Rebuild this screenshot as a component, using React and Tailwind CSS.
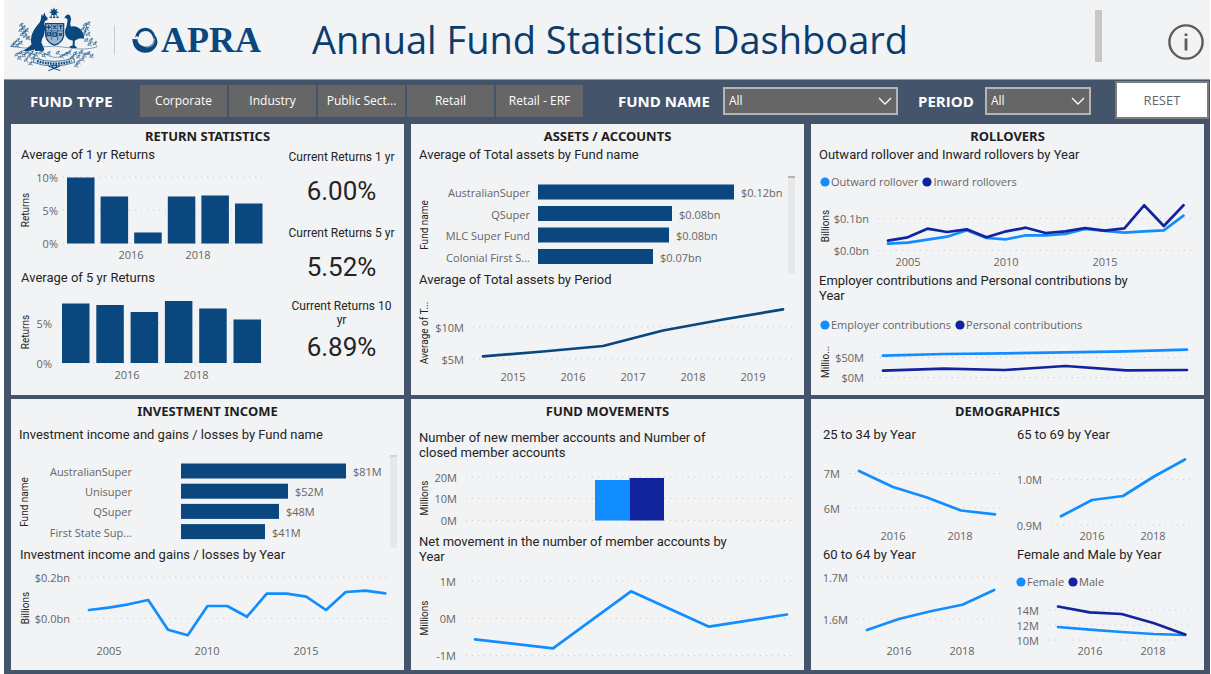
import React, { useState } from "react"

const NAVY = "#09477e"
const BLUE = "#118dff"
const INDIGO = "#12239e"

const FUND_TYPES = ["Corporate", "Industry", "Public Sect...", "Retail", "Retail - ERF"]

// Turns a list of heights into evenly spaced points
const spread = (start, step, ys) => ys.map((y, i) => [start + step * i, y])

const Coat = () => {
  const leaves = [
    [60, 72], [67, 80], [58, 88], [70, 94], [62, 101], [76, 88], [72, 106], [80, 112],
    [50, 118], [40, 126], [58, 126], [34, 134], [48, 134], [252, 72], [262, 68], [246, 84],
    [258, 84], [250, 96], [262, 100], [244, 108], [270, 118], [256, 118], [282, 128], [266, 130],
    [46, 162], [58, 156], [68, 164], [54, 172], [78, 154], [84, 166], [92, 156], [74, 178],
    [96, 172], [88, 188], [104, 160], [222, 158], [232, 168], [240, 154], [250, 164], [262, 158],
    [272, 166], [244, 176], [232, 184], [214, 170], [226, 194], [118, 156], [128, 164], [194, 160],
    [204, 156], [182, 166], [142, 158], [170, 156],
  ]
  return (
    <svg viewBox="24 18 270 196" className="h-[65px] w-[90px] shrink-0" fill={NAVY} role="img" aria-label="Australian Government">
      <path d="M159 19l3 8 8-4-4 8 8 3-8 3 3 8-7-4-3 6-3-6-7 4 3-8-8-3 8-3-4-8 8 4z" />
      <path d="M146 49h7M156 49h7M166 49h7" stroke={NAVY} strokeWidth="4" />
      {/* Kangaroo */}
      <path d="M122 39l4 6 4-11 4 11q8 5 6 11l-9 5q-3 9 1 16l10 9 1 7-12-4q-1 17-8 25l-2 11 8 19v6l-27 1-1-5q-13 5-37 5 18-10 27-20-5-22 7-43 9-14 18-24 4-8 4-14z" />
      {/* Emu */}
      <path d="M190 50l6-7q7-5 12 2 4 7 1 17-3 9 1 15 14-4 26 6 11 8 14 30-13-3-20 2l-8 4-1 14 8 9h-14l-9-1 1-5 8-2 1-14-13-5q-14-10-10-29 5-9 6-22l1-8-3-3z" />
      {/* Shield with six badges */}
      <path d="M134 68h54v38q-6 22-27 27-21-5-27-27z" fill="#9fb5cc" stroke={NAVY} strokeWidth="4" />
      <path d="M134 90h54M152 68v50M170 68v50" stroke={NAVY} strokeWidth="2" fill="none" />
      <path d="M143 72v14M137 79h12M156 74l10 10M166 74l-10 10M174 75h10M179 72v14M138 96h10v8h-10zM156 96h10v10h-10zM174 97l9 8M183 97l-9 8" stroke={NAVY} strokeWidth="4" fill="none" />
      {/* Wattle branches */}
      {leaves.map(([x, y], i) => (
        <g key={i} fill="none" stroke={NAVY} strokeWidth="2" opacity="0.85">
          <path d={`M${x - 5} ${y + 4}q1-9 8-8 1 8-8 8M${x + 1} ${y + 2}l6 4`} />
          <circle cx={x + 4} cy={y - 4} r="1.8" />
        </g>
      ))}
      <path d="M28 136q40 10 86 3t92 2 84-3M60 70q10 32 32 50M258 68q-2 26-12 44M50 158q44-10 68 18 16 14 40 28M270 160q-42-12-66 14-18 18-46 30M112 144q26 24 50 26t54-28" fill="none" stroke={NAVY} strokeWidth="2" opacity="0.7" />
      {/* Scroll */}
      <path d="M100 172q60 20 118 0l4 13q-66 22-126 0z" fill="#dbe3ec" stroke={NAVY} strokeWidth="2" />
      <path d="M108 181q54 16 104 0" fill="none" stroke={NAVY} strokeWidth="7" strokeDasharray="5 3" />
      <path d="M142 196l36 14M178 196l-36 14M152 194h16l-4 8h-8z" stroke={NAVY} strokeWidth="3" fill="none" />
    </svg>
  )
}

const Ring = () => (
  <svg viewBox="0 0 78 78" className="h-[26px] w-[26px] shrink-0" fill={NAVY} aria-hidden="true">
    <path d="M9 33Q14 3 40 2q26 2 30 28l-6 6Q60 13 41 12 21 13 19 31l-5-4z" />
    <path d="M1 36l15 1q2 20 23 22 21 0 27-18 3-11 0-20 14 16 9 32-9 23-35 24Q4 76 1 36z" />
    <path d="M37 64q28-3 29-33 9 31-29 33z" fill="#7d9cbd" />
  </svg>
)

const Chart = ({ width, height, label, axis, ticks, tickX, grid, years = [], yearY, children }) => (
  <svg
    viewBox={`0 0 ${width} ${height}`}
    className="block w-full overflow-visible font-['Open_Sans',sans-serif] text-[11px]"
    role="img"
    aria-label={label}
  >
    {ticks.map(([text, y]) => (
      <g key={text}>
        <line x1={grid[0]} x2={grid[1]} y1={y} y2={y} stroke="#c8c8c8" strokeDasharray="1 5" />
        <text x={tickX} y={y} textAnchor="end" dominantBaseline="central" fill="#666564">
          {text}
        </text>
      </g>
    ))}
    {years.map(([text, x]) => (
      <text key={text} x={x} y={yearY} textAnchor="middle" dominantBaseline="central" fill="#666564">
        {text}
      </text>
    ))}
    {axis && <AxisTitle {...axis} />}
    {children}
  </svg>
)

const AxisTitle = ({ text, x, y }) => (
  <text
    transform={`translate(${x} ${y}) rotate(-90)`}
    textAnchor="middle"
    dominantBaseline="central"
    fill="#252423"
    className="font-[Roboto,sans-serif] text-[10px]"
  >
    {text}
  </text>
)

const Line = ({ points, color = BLUE }) => (
  <polyline
    points={points.map((p) => p.join(",")).join(" ")}
    fill="none"
    stroke={color}
    strokeWidth="2.7"
    strokeLinejoin="round"
    strokeLinecap="round"
  />
)

const Columns = ({ start, step, width, base, tops }) =>
  tops.map((top, i) => (
    <rect key={i} x={start + step * i} y={top} width={width} height={base - top} fill={NAVY} />
  ))

const RankedBars = ({ label, height, rows, nameX, barX, first, step, axisY, scroll }) => (
  <Chart width={393} height={height} label={label} ticks={[]} axis={{ text: "Fund name", x: 13, y: axisY }}>
    {rows.map(([name, size, value], i) => {
      const y = first + step * i
      return (
        <g key={name} fill="#666564">
          <text x={nameX} y={y + 8} textAnchor="end" dominantBaseline="central">
            {name}
          </text>
          <rect x={barX} y={y} width={size} height="15" fill={NAVY} />
          <text x={barX + size + 7} y={y + 8} dominantBaseline="central">
            {value}
          </text>
        </g>
      )
    })}
    <rect x={scroll.x} y={scroll.y} width="7" height={scroll.height} rx="3" fill="#e6e7e9" />
    <rect x={scroll.x} y={scroll.y} width="7" height="2" fill={scroll.thumb} />
  </Chart>
)

const Legend = ({ items }) => (
  <ul className="flex gap-1 pl-[9px] font-['Open_Sans',sans-serif] text-[11px] leading-4 text-[#666564]">
    {items.map(([text, color]) => (
      <li key={text} className="flex items-center gap-px whitespace-nowrap">
        <svg viewBox="0 0 10 10" className="h-2.5 w-2.5" aria-hidden="true">
          <circle cx="5" cy="5" r="4.6" fill={color} />
        </svg>
        {text}
      </li>
    ))}
  </ul>
)

const Panel = ({ title, children }) => (
  <section className="bg-[#f1f3f5] pt-0.5">
    <h2 className="mb-px text-center font-['Noto_Sans',sans-serif] text-[13px] leading-5 font-bold text-[#1f1e1d]">{title}</h2>
    {children}
  </section>
)

const ChartTitle = ({ className = "pl-2", children }) => (
  <h3 className={`text-[13px] leading-[15px] ${className}`}>{children}</h3>
)

const Kpi = ({ label, value, className }) => (
  <div className={`text-center ${className}`}>
    <p className="text-[12px] leading-[14px]">{label}</p>
    <p className="text-[26px] leading-8">{value}</p>
  </div>
)

const Dropdown = ({ id, label, options, labelClass, className }) => (
  <>
    <label htmlFor={id} className={`text-[15px] font-bold text-white ${labelClass}`}>
      {label}
    </label>
    <div className={`relative ${className}`}>
      <select
        id={id}
        className="block h-7 w-full appearance-none border-2 border-[#b5b5b5] bg-[#666666] px-1 text-[12px] text-white"
      >
        {options.map((option) => (
          <option key={option}>{option}</option>
        ))}
      </select>
      <svg viewBox="0 0 14 8" className="pointer-events-none absolute top-2.5 right-1.5 h-2 w-3.5" fill="none" stroke="#fff" strokeWidth="1.3" aria-hidden="true">
        <path d="M1 1l6 6 6-6" />
      </svg>
    </div>
  </>
)

const Header = () => (
  <header className="flex h-20 items-center border-b border-[#8d98a8] bg-[#f1f3f5] pr-1.5 pl-[5px]">
    <div className="flex w-[303px] shrink-0 items-center">
      <Coat />
      <div className="ml-[15px] h-[30px] w-px bg-[#c3cad3]" />
      <div className="ml-[17px] flex items-center gap-[3px]">
        <Ring />
        <span className="font-['Liberation_Serif',serif] text-[36px] leading-9 font-bold text-[#09477e]">APRA</span>
      </div>
    </div>
    <h1 className="pb-0.5 text-[38px] leading-[52px] whitespace-nowrap text-[#0b3c6e]">Annual Fund Statistics Dashboard</h1>
    <div className="mt-2.5 ml-auto h-[52px] w-[7px] shrink-0 self-start bg-[#c8c8c8]" />
    <button type="button" aria-label="Information" className="ml-[66px] shrink-0 pt-1">
      <svg viewBox="0 0 36 36" className="block h-9 w-9" fill="none" stroke="#5c5b5a">
        <circle cx="18" cy="18" r="16.6" strokeWidth="2.4" />
        <path d="M18 14.5v12M18 9.5v2.6" strokeWidth="2.8" />
      </svg>
    </button>
  </header>
)

const FilterBar = () => {
  const [selected, setSelected] = useState("")

  return (
    <div className="flex h-11 items-start pt-px pr-px">
      <div className="flex min-w-0 flex-1 items-center pt-1">
        <span className="ml-[26px] w-[110px] shrink-0 text-[15px] font-bold text-white">FUND TYPE</span>
        <div className="grid w-[443px] shrink-0 grid-cols-5 gap-0.5" role="group" aria-label="Fund type">
          {FUND_TYPES.map((type) => (
            <button
              key={type}
              type="button"
              aria-pressed={selected === type}
              onClick={() => setSelected(selected === type ? "" : type)}
              className="h-8 bg-[#666666] text-[12px] whitespace-nowrap text-white"
            >
              {type}
            </button>
          ))}
        </div>
        <Dropdown id="fund-name" label="FUND NAME" options={["All", "AustralianSuper", "QSuper", "Unisuper"]} labelClass="ml-[35px] w-[105px] shrink-0" className="w-[175px]" />
        <Dropdown id="period" label="PERIOD" options={["All", "2018", "2019"]} labelClass="ml-5 w-[67px] shrink-0" className="w-[106px]" />
      </div>
      <button
        type="button"
        onClick={() => setSelected("")}
        className="h-[38px] w-[94px] border-2 border-[#7b7b7b] bg-white pt-0.5 text-[13px] text-[#666564]"
      >
        RESET
      </button>
    </div>
  )
}

const ReturnStatistics = () => (
  <Panel title="RETURN STATISTICS">
    <div className="flex">
      <div className="min-w-0 flex-1">
        <ChartTitle className="pl-2.5">Average of 1 yr Returns</ChartTitle>
        <Chart
          width={272}
          height={108}
          label="Average of 1 yr Returns"
          axis={{ text: "Returns", x: 14, y: 48 }}
          ticks={[["10%", 15], ["5%", 48], ["0%", 81]]}
          tickX={47}
          grid={[52, 252]}
          years={[["2016", 120], ["2018", 187]]}
          yearY={92}
        >
          <Columns start={56} step={33.6} width={27.5} base={81.5} tops={[15.5, 34.5, 70.5, 34.5, 33.5, 41.5]} />
        </Chart>
        <ChartTitle className="pl-2.5">Average of 5 yr Returns</ChartTitle>
        <Chart
          width={272}
          height={110}
          label="Average of 5 yr Returns"
          axis={{ text: "Returns", x: 14, y: 47 }}
          ticks={[["5%", 38], ["0%", 78]]}
          tickX={41}
          grid={[46, 252]}
          years={[["2016", 116], ["2018", 185]]}
          yearY={89}
        >
          <Columns start={51} step={34.3} width={27.5} base={78} tops={[18.5, 20, 27, 16, 23.5, 34.5]} />
        </Chart>
      </div>
      <div className="w-[121px] pt-[3px] pr-2 pl-1">
        <Kpi label="Current Returns 1 yr" value="6.00%" className="space-y-[11px]" />
        <Kpi label="Current Returns 5 yr" value="5.52%" className="mt-[19px] space-y-[11px]" />
        <Kpi label="Current Returns 10 yr" value="6.89%" className="mt-4 space-y-1" />
      </div>
    </div>
  </Panel>
)

const AssetsAccounts = () => (
  <Panel title="ASSETS / ACCOUNTS">
    <ChartTitle>Average of Total assets by Fund name</ChartTitle>
    <RankedBars
      label="Average of Total assets by Fund name"
      height={110}
      rows={[
        ["AustralianSuper", 196, "$0.12bn"],
        ["QSuper", 134, "$0.08bn"],
        ["MLC Super Fund", 131, "$0.08bn"],
        ["Colonial First S...", 115, "$0.07bn"],
      ]}
      nameX={119}
      barX={127}
      first={22.5}
      step={21.5}
      axisY={63}
      scroll={{ x: 377, y: 14, height: 98, thumb: "#b3b3b3" }}
    />
    <ChartTitle>Average of Total assets by Period</ChartTitle>
    <Chart
      width={393}
      height={108}
      label="Average of Total assets by Period"
      axis={{ text: "Average of T...", x: 13, y: 46 }}
      ticks={[["$10M", 40], ["$5M", 72]]}
      tickX={53}
      grid={[62, 381]}
      years={[["2015", 102], ["2016", 162], ["2017", 222], ["2018", 282], ["2019", 342]]}
      yearY={89}
    >
      <Line color={NAVY} points={spread(72, 60, [69.3, 64.5, 59, 43.5, 32.5, 22.3])} />
    </Chart>
  </Panel>
)

const Rollovers = () => (
  <Panel title="ROLLOVERS">
    <ChartTitle>Outward rollover and Inward rollovers by Year</ChartTitle>
    <div className="pt-3">
      <Legend items={[["Outward rollover", BLUE], ["Inward rollovers", INDIGO]]} />
    </div>
    <Chart
      width={393}
      height={83}
      label="Outward rollover and Inward rollovers by Year"
      axis={{ text: "Billions", x: 14, y: 36 }}
      ticks={[["$0.1bn", 28.5], ["$0.0bn", 60.5]]}
      tickX={58}
      grid={[67, 380]}
      years={[["2005", 97], ["2010", 195], ["2015", 294]]}
      yearY={71}
    >
      <Line points={spread(77, 19.7, [53.7, 52.7, 49.7, 46.7, 40.3, 48, 49.3, 45.3, 45.3, 44, 39, 41, 42.7, 41.3, 40.3, 25.7])} />
      <Line color={INDIGO} points={spread(77, 19.7, [50.7, 47.3, 38.7, 42, 39.3, 47.3, 41.3, 37.7, 43, 41.3, 38, 40.7, 38.3, 15.3, 36, 15.3])} />
    </Chart>
    <ChartTitle className="pr-12 pl-2">Employer contributions and Personal contributions by Year</ChartTitle>
    <div className="pt-3.5">
      <Legend items={[["Employer contributions", BLUE], ["Personal contributions", INDIGO]]} />
    </div>
    <Chart
      width={393}
      height={62}
      label="Employer contributions and Personal contributions by Year"
      axis={{ text: "Millio...", x: 14, y: 29 }}
      ticks={[["$50M", 24.5], ["$0M", 44.5]]}
      tickX={53}
      grid={[63, 380]}
    >
      <Line points={spread(72, 60.8, [22.7, 21, 20.3, 19.3, 18.3, 16.7])} />
      <Line color={INDIGO} points={spread(72, 60.8, [37.7, 35.7, 37, 33, 37.3, 37])} />
    </Chart>
  </Panel>
)

const InvestmentIncome = () => (
  <Panel title="INVESTMENT INCOME">
    <ChartTitle className="pt-[5px] pl-2">Investment income and gains / losses by Fund name</ChartTitle>
    <RankedBars
      label="Investment income and gains / losses by Fund name"
      height={105}
      rows={[
        ["AustralianSuper", 165, "$81M"],
        ["Unisuper", 107, "$52M"],
        ["QSuper", 98, "$48M"],
        ["First State Sup...", 84, "$41M"],
      ]}
      nameX={121}
      barX={170}
      first={21.5}
      step={20.2}
      axisY={60}
      scroll={{ x: 379, y: 13, height: 93, thumb: "#d2d3d5" }}
    />
    <ChartTitle className="pl-[9px]">Investment income and gains / losses by Year</ChartTitle>
    <Chart
      width={393}
      height={108}
      label="Investment income and gains / losses by Year"
      axis={{ text: "Billions", x: 14, y: 46 }}
      ticks={[["$0.2bn", 15], ["$0.0bn", 56.5]]}
      tickX={59}
      grid={[68, 380]}
      years={[["2005", 98], ["2010", 196], ["2015", 295]]}
      yearY={88}
    >
      <Line points={spread(78, 19.75, [48, 45.7, 42.3, 38, 67.7, 73.3, 44, 44, 54.7, 31.7, 31.7, 34.7, 48, 30, 28.7, 31.3])} />
    </Chart>
  </Panel>
)

const FundMovements = () => (
  <Panel title="FUND MOVEMENTS">
    <ChartTitle className="pt-2 pr-16 pl-2">Number of new member accounts and Number of closed member accounts</ChartTitle>
    <Chart
      width={393}
      height={74}
      label="Number of new member accounts and Number of closed member accounts"
      axis={{ text: "Millions", x: 13, y: 38 }}
      ticks={[["20M", 17], ["10M", 38.5], ["0M", 60.5]]}
      tickX={46}
      grid={[55, 385]}
    >
      <rect x="184" y="20" width="34.5" height="40.5" fill={BLUE} />
      <rect x="218.5" y="18" width="34.5" height="42.5" fill={INDIGO} />
    </Chart>
    <ChartTitle className="pr-16 pl-2">Net movement in the number of member accounts by Year</ChartTitle>
    <Chart
      width={393}
      height={106}
      label="Net movement in the number of member accounts by Year"
      axis={{ text: "Millions", x: 13, y: 54 }}
      ticks={[["1M", 17], ["0M", 54.5], ["-1M", 91.5]]}
      tickX={45}
      grid={[55, 385]}
    >
      <Line points={spread(64, 78, [75.3, 84.3, 27.3, 62.7, 50.5])} />
    </Chart>
  </Panel>
)

const Demographics = () => (
  <Panel title="DEMOGRAPHICS">
    <div className="grid grid-cols-[196fr_197fr] pt-[5px]">
      <div>
        <ChartTitle className="pl-3">25 to 34 by Year</ChartTitle>
        <Chart width={196} height={105} label="25 to 34 by Year" ticks={[["7M", 31.5], ["6M", 66]]} tickX={29} grid={[38, 192]} years={[["2016", 82], ["2018", 149]]} yearY={93}>
          <Line points={spread(48, 34, [29, 45, 55.5, 68.5, 72.3])} />
        </Chart>
      </div>
      <div>
        <ChartTitle className="pl-2.5">65 to 69 by Year</ChartTitle>
        <Chart width={197} height={105} label="65 to 69 by Year" ticks={[["1.0M", 37.5], ["0.9M", 83]]} tickX={35} grid={[44, 187]} years={[["2016", 85], ["2018", 146]]} yearY={93}>
          <Line points={spread(54, 31, [74.3, 58, 54, 34.5, 17.5])} />
        </Chart>
      </div>
      <div>
        <ChartTitle className="pl-3">60 to 64 by Year</ChartTitle>
        <Chart width={196} height={108} label="60 to 64 by Year" ticks={[["1.7M", 15], ["1.6M", 57]]} tickX={37} grid={[46, 189]} years={[["2016", 88], ["2018", 151]]} yearY={88}>
          <Line points={spread(56, 31.8, [68, 57, 49.3, 42.7, 28])} />
        </Chart>
      </div>
      <div>
        <ChartTitle className="pl-2.5">Female and Male by Year</ChartTitle>
        <div className="pt-3">
          <Legend items={[["Female", BLUE], ["Male", INDIGO]]} />
        </div>
        <Chart width={197} height={80} label="Female and Male by Year" ticks={[["14M", 20], ["12M", 35], ["10M", 50]]} tickX={32} grid={[42, 184]} years={[["2016", 83], ["2018", 146]]} yearY={60}>
          <Line points={spread(51, 31.8, [37, 39.7, 42, 44, 45])} />
          <Line color={INDIGO} points={spread(51, 31.8, [16.5, 22.3, 24, 33, 44.5])} />
        </Chart>
      </div>
    </div>
  </Panel>
)

const App = () => {
  return (
    <main className="min-h-screen bg-white pr-px pl-1 font-['Open_Sans',sans-serif]">
      <Header />
      <div className="bg-[#44546a] pb-1">
        <FilterBar />
        <div className="grid grid-cols-3 gap-x-[7px] gap-y-1 pr-1.5 pl-[7px] font-[Roboto,sans-serif] text-[#252423]">
          <ReturnStatistics />
          <AssetsAccounts />
          <Rollovers />
          <InvestmentIncome />
          <FundMovements />
          <Demographics />
        </div>
      </div>
    </main>
  )
}

export default App
